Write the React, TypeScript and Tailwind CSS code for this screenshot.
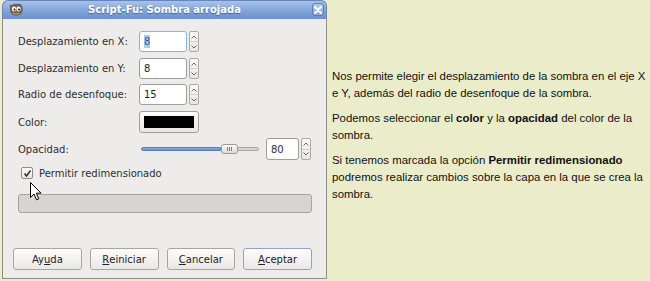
import React from "react";

const dlgFont = { fontFamily: '"DejaVu Sans", sans-serif' };

function Spin({ h = 21 }: { h?: number }) {
  return (
    <div
      className="w-[10px] ml-[2px] rounded-[2px] border border-[#a9a9a6] bg-gradient-to-b from-[#fbfbfa] to-[#e6e6e3] flex flex-col"
      style={{ height: h }}
    >
      <div className="flex-1 flex items-center justify-center border-b border-[#d3d3d0]">
        <svg width="6" height="4" viewBox="0 0 6 4">
          <path d="M0.5 3.5 L3 1 L5.5 3.5" stroke="#6b6b6b" strokeWidth="1" fill="none" />
        </svg>
      </div>
      <div className="flex-1 flex items-center justify-center">
        <svg width="6" height="4" viewBox="0 0 6 4">
          <path d="M0.5 0.5 L3 3 L5.5 0.5" stroke="#6b6b6b" strokeWidth="1" fill="none" />
        </svg>
      </div>
    </div>
  );
}

function NumField({ value, w = 48, focused = false }: { value: string; w?: number; focused?: boolean }) {
  return (
    <div className="flex items-center">
      <div
        className={
          "h-[21px] rounded-[3px] bg-white flex items-center pl-[4px] text-[10px] text-[#1e1e1e] border " +
          (focused ? "border-[#8fb0d9]" : "border-[#9d9d9a]")
        }
        style={{ width: w }}
      >
        {focused ? (
          <span className="bg-[#aecbef] text-[#3c5a8a] leading-[13px] px-[0px]">{value}</span>
        ) : (
          <span>{value}</span>
        )}
      </div>
      <Spin />
    </div>
  );
}

function Btn({ children, def = false }: { children: React.ReactNode; def?: boolean }) {
  return (
    <div
      className={
        "w-[70px] h-[22px] rounded-[3px] border flex items-center justify-center text-[10px] text-[#222] bg-gradient-to-b from-[#fdfdfc] to-[#e9e8e5] " +
        (def ? "border-[#8aa6cf]" : "border-[#a7a6a2]")
      }
    >
      {children}
    </div>
  );
}

function Wilber() {
  return (
    <svg width="16" height="14" viewBox="0 0 16 14">
      <path d="M2 4 Q1 1 4 2 Q6 0 9 1 Q13 0 14 3 Q16 7 13 11 Q9 14 5 12 Q1 10 2 4 Z" fill="#6e6253" />
      <ellipse cx="6" cy="6" rx="2.2" ry="2.4" fill="#fff" />
      <ellipse cx="10.5" cy="6" rx="2.2" ry="2.4" fill="#fff" />
      <circle cx="6.5" cy="6.5" r="1" fill="#111" />
      <circle cx="11" cy="6.5" r="1" fill="#111" />
      <path d="M5 10 Q8 12 11 10" stroke="#c7a36a" strokeWidth="1.2" fill="none" />
    </svg>
  );
}

export default function App() {
  return (
    <div className="w-[650px] h-[281px] bg-[#ebecca] flex overflow-hidden">
      {/* dialog window */}
      <div className="ml-[2px] w-[325px] h-[279px] flex flex-col relative shrink-0" style={dlgFont}>
        {/* title bar */}
        <div className="h-[19px] rounded-t-[6px] bg-gradient-to-b from-[#a9c2e8] via-[#85a6da] to-[#6c90cc] border border-b-0 border-[#6486bf] flex items-center relative">
          <div className="absolute left-[5px] top-[2px]">
            <Wilber />
          </div>
          <div
            className="flex-1 text-center text-white font-bold text-[10px] leading-none"
            style={{ textShadow: "0 1px 1px rgba(40,60,100,0.6)" }}
          >
            Script-Fu: Sombra arrojada
          </div>
          <div className="absolute right-[2px] top-[2px] w-[12px] h-[13px] rounded-[3px] border border-[#5c7fb8] bg-gradient-to-b from-[#b2c8ea] to-[#8aa8d8] flex items-center justify-center">
            <svg width="8" height="8" viewBox="0 0 8 8">
              <path d="M1 1 L7 7 M7 1 L1 7" stroke="#fff" strokeWidth="2" strokeLinecap="round" />
            </svg>
          </div>
        </div>
        {/* body */}
        <div className="flex-1 bg-[#edeceb] border-x border-b border-[#8e8e8b] flex flex-col pl-[15px] pr-[14px] text-[#2e2e2e] text-[10px]">
          <div className="mt-[12px] flex items-center h-[21px]">
            <div className="w-[121px]">Desplazamiento en X:</div>
            <NumField value="8" focused />
          </div>
          <div className="mt-[6px] flex items-center h-[21px]">
            <div className="w-[121px]">Desplazamiento en Y:</div>
            <NumField value="8" />
          </div>
          <div className="mt-[5px] flex items-center h-[21px]">
            <div className="w-[121px]">Radio de desenfoque:</div>
            <NumField value="15" />
          </div>
          <div className="mt-[6px] flex items-center h-[22px]">
            <div className="w-[121px]">Color:</div>
            <div className="w-[60px] h-[22px] rounded-[3px] border border-[#a2a19e] bg-gradient-to-b from-[#fdfdfc] to-[#e8e7e4] p-[4px]">
              <div className="w-full h-full bg-black" />
            </div>
          </div>
          <div className="mt-[5px] flex items-center h-[22px]">
            <div className="w-[123px]">Opacidad:</div>
            {/* slider */}
            <div className="relative w-[118px] h-[10px] flex items-center">
              <div className="w-[80px] h-[4px] rounded-l-[2px] bg-gradient-to-b from-[#8eb1e2] to-[#5f8dd0] border border-[#5a83bd]" />
              <div className="flex-1 h-[4px] rounded-r-[2px] bg-[#d6d5d2] border border-[#a9a8a5]" />
              <div className="absolute left-[80px] top-0 w-[17px] h-[10px] rounded-[3px] border border-[#9c9b98] bg-gradient-to-b from-[#fbfbfa] to-[#dddcd9] flex items-center justify-center gap-[1px]">
                <div className="w-px h-[4px] bg-[#7d7d7a]" />
                <div className="w-px h-[4px] bg-[#7d7d7a]" />
                <div className="w-px h-[4px] bg-[#7d7d7a]" />
              </div>
            </div>
            <div className="ml-[7px]">
              <div className="flex items-center">
                <div className="w-[33px] h-[22px] rounded-[3px] bg-white border border-[#9d9d9a] flex items-center pl-[4px] text-[10px]">
                  80
                </div>
                <Spin h={22} />
              </div>
            </div>
          </div>
          <div className="mt-[6px] h-[14px] flex items-center">
            <div className="ml-[3px] w-[12px] h-[12px] rounded-[2px] border border-[#8f8e8b] bg-gradient-to-b from-[#fdfdfc] to-[#e6e5e2] flex items-center justify-center">
              <svg width="9" height="9" viewBox="0 0 9 9">
                <path d="M1.5 4.5 L3.5 7 L7.5 1.5" stroke="#2a2a2a" strokeWidth="1.4" fill="none" />
              </svg>
            </div>
            <div className="ml-[6px]">Permitir redimensionado</div>
          </div>
          <div className="mt-[14px] w-[294px] h-[19px] rounded-[3px] border border-[#a6a5a2] bg-[#d6d5d2]" />
          <div className="flex-1" />
          <div className="flex items-center gap-[8px] -ml-[5px] mb-[8px]">
            <Btn>
              Ay<span className="underline">u</span>da
            </Btn>
            <Btn>
              <span className="underline">R</span>einiciar
            </Btn>
            <Btn>
              <span className="underline">C</span>ancelar
            </Btn>
            <Btn def>
              <span className="underline">A</span>ceptar
            </Btn>
          </div>
        </div>
        {/* mouse cursor */}
        <svg className="absolute left-[28px] top-[182px]" width="12" height="19" viewBox="0 0 12 19">
          <path d="M0.5 0.5 L0.5 15.5 L4 12 L6.5 17.8 L8.8 16.8 L6.3 11.2 L11 11.2 Z" fill="#fff" stroke="#000" strokeWidth="1" />
        </svg>
      </div>
      {/* explanatory text */}
      <div
        className="ml-[5px] w-[318px] shrink-0 pt-[68px] text-[11.4px] leading-[17px] text-[#111]"
        style={{ fontFamily: '"Liberation Sans", Arial, sans-serif' }}
      >
        <p className="whitespace-nowrap">Nos permite elegir el desplazamiento de la sombra en el eje X</p>
        <p>e Y, además del radio de desenfoque de la sombra.</p>
        <p className="mt-[8px]">
          Podemos seleccionar el <b>color</b> y la <b>opacidad</b> del color de la
        </p>
        <p>sombra.</p>
        <p className="mt-[8px]">
          Si tenemos marcada la opción <b>Permitir redimensionado</b>
        </p>
        <p>podremos realizar cambios sobre la capa en la que se crea la</p>
        <p>sombra.</p>
      </div>
    </div>
  );
}
